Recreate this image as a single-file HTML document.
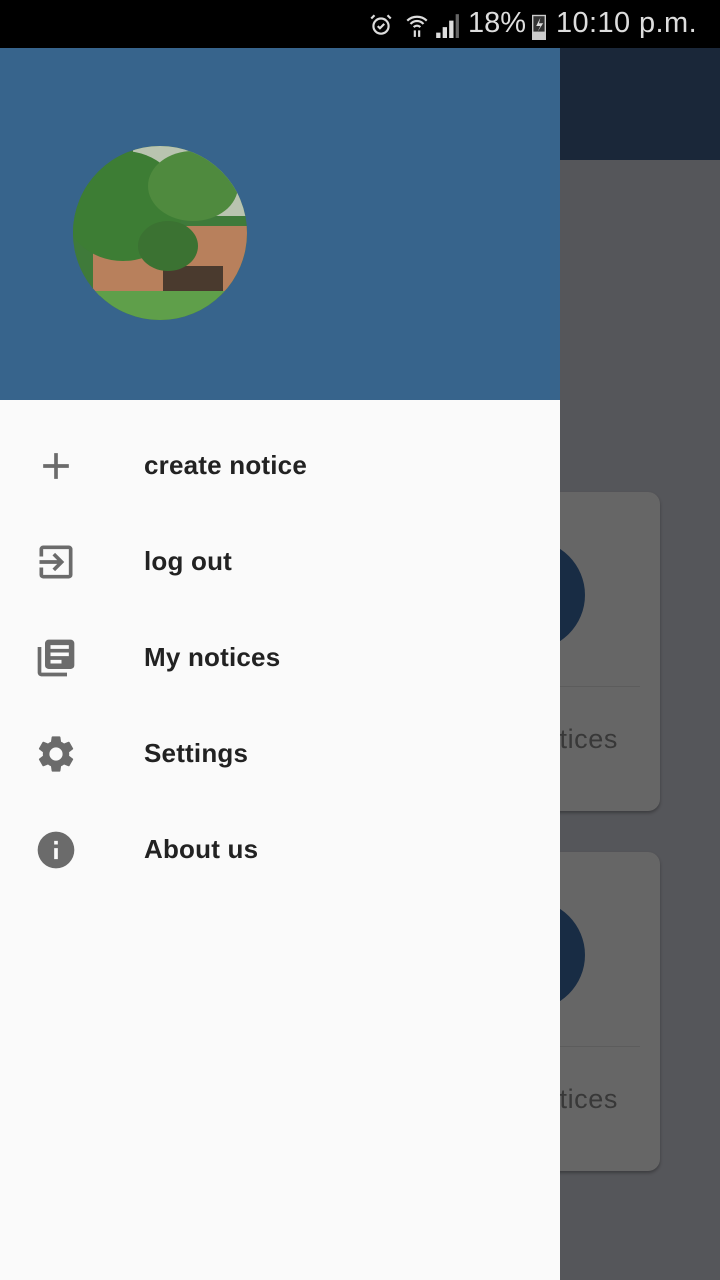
<html><head><style>
body{margin:0;width:720px;height:1280px;position:relative;overflow:hidden;background:#55565a;font-family:"Liberation Sans",Roboto,sans-serif}
.sb{position:absolute;top:0;left:0;width:720px;height:48px;background:#000;color:#ddd}
.ab{position:absolute;top:48px;left:0;width:720px;height:112px;background:#1a2739}
.card{position:absolute;left:380px;width:280px;height:319px;background:#666;border-radius:12px;box-shadow:0 2px 3px rgba(0,0,0,.3);overflow:hidden}
.card .c{position:absolute;left:95px;top:48px;width:110px;height:110px;border-radius:50%;background:#182c44}
.card .d{position:absolute;left:0;right:20px;top:194px;height:1px;background:#5c5c5c}
.card .t{position:absolute;left:0;width:238px;text-align:right;top:232px;font-size:27px;color:#383838;letter-spacing:.6px}
.dr{position:absolute;left:0;top:48px;width:560px;height:1232px;background:#fafafa}
.hd{position:absolute;left:0;top:0;width:560px;height:352px;background:#37648c}
.av{position:absolute;left:73px;top:98px;width:174px;height:174px;border-radius:50%;overflow:hidden;background:#4a7a3a}
.it{position:absolute;left:0;width:560px;height:96px}
.it span{position:absolute;left:144px;top:32px;font-size:26px;color:#222;font-weight:bold;letter-spacing:.2px}
.it svg{position:absolute;left:34px;top:26px}
</style></head><body>
<div class="sb">
<svg style="position:absolute;left:368px;top:12px" width="26" height="26" viewBox="0 0 24 24" fill="none" stroke="#ddd" stroke-width="2"><circle cx="12" cy="13" r="7"/><path d="M9 13l2 2 4-4M3 6l3-3M21 6l-3-3"/></svg>
<svg style="position:absolute;left:404px;top:12px" width="26" height="26" viewBox="0 0 24 24" fill="none" stroke="#ddd" stroke-width="2"><path d="M3 8a13 13 0 0 1 18 0M6 11a8 8 0 0 1 12 0M9 14a4 4 0 0 1 6 0M10 17v6M14 17v6"/></svg>
<svg style="position:absolute;left:434px;top:12px" width="26" height="26" viewBox="0 0 24 24" fill="#ddd"><path d="M2 24h4v-5H2zM8 24h4v-10H8zM14 24h4V8h-4z"/><path d="M20 24h3V2h-3z" fill="#666"/></svg>
<span style="position:absolute;left:468px;top:7px;font-size:29px">18%</span>
<svg style="position:absolute;left:530px;top:12px" width="18" height="28" viewBox="0 0 12 20"><rect x="1" y="2" width="10" height="18" fill="#ccc"/><rect x="2" y="3" width="8" height="11" fill="#333"/><path d="M7 4L4 10h3l-2 4 4-6H6z" fill="#ddd"/></svg>
<span style="position:absolute;left:556px;top:7px;font-size:29px;letter-spacing:.4px">10:10 p.m.</span>
</div>
<div class="ab"></div>
<div class="card" style="top:492px"><div class="c"></div><div class="d"></div><div class="t">My notices</div></div>
<div class="card" style="top:852px"><div class="c"></div><div class="d"></div><div class="t">All notices</div></div>
<div class="dr">
<div class="hd"><div class="av">
<svg width="174" height="174" viewBox="0 0 174 174">
<rect width="174" height="174" fill="#3f7a3a"/>
<rect x="60" y="0" width="114" height="70" fill="#b9c4b0"/>
<rect x="20" y="80" width="154" height="70" fill="#b8805c"/>
<rect x="90" y="120" width="60" height="30" fill="#4a3a2e"/>
<ellipse cx="50" cy="60" rx="60" ry="55" fill="#3d7d34"/>
<ellipse cx="120" cy="40" rx="45" ry="35" fill="#4f8a3e"/>
<ellipse cx="95" cy="100" rx="30" ry="25" fill="#3b7232"/>
<rect x="0" y="145" width="174" height="29" fill="#5f9f4a"/>
</svg></div></div>
<div class="it" style="top:370px"><svg width="44" height="44" viewBox="0 0 24 24"><path d="M19 13h-6v6h-2v-6H5v-2h6V5h2v6h6z" fill="#6b6b6b"/></svg><span>create notice</span></div>
<div class="it" style="top:466px"><svg width="44" height="44" viewBox="0 0 24 24"><path d="M10.09 15.59L11.5 17l5-5-5-5-1.41 1.41L12.67 11H3v2h9.67zM19 3H5a2 2 0 0 0-2 2v4h2V5h14v14H5v-4H3v4a2 2 0 0 0 2 2h14a2 2 0 0 0 2-2V5a2 2 0 0 0-2-2z" fill="#6b6b6b"/></svg><span>log out</span></div>
<div class="it" style="top:562px"><svg width="44" height="44" viewBox="0 0 24 24"><path d="M4 6H2v14a2 2 0 0 0 2 2h14v-2H4V6zm16-4H8a2 2 0 0 0-2 2v12a2 2 0 0 0 2 2h12a2 2 0 0 0 2-2V4a2 2 0 0 0-2-2zm-1 9H9V9h10v2zm-4 4H9v-2h6v2zm4-8H9V5h10v2z" fill="#6b6b6b"/></svg><span>My notices</span></div>
<div class="it" style="top:658px"><svg width="44" height="44" viewBox="0 0 24 24"><path d="M19.14 12.94a7 7 0 0 0 0-1.880l2.03-1.58a.5.5 0 0 0 .12-.61l-1.92-3.32a.5.5 0 0 0-.59-.22l-2.39.96a7 7 0 0 0-1.620-.94l-.36-2.54a.5.5 0 0 0-.48-.41h-3.84a.5.5 0 0 0-.47.41l-.36 2.54a7 7 0 0 0-1.62.94l-2.39-.96a.5.5 0 0 0-.59.22L2.74 8.87a.5.5 0 0 0 .12.61l2.03 1.58a7 7 0 0 0 0 1.88l-2.03 1.58a.5.5 0 0 0-.12.61l1.92 3.32c.12.22.37.29.59.22l2.39-.96c.5.38 1.04.7 1.62.94l.36 2.54c.05.24.24.41.48.41h3.84c.24 0 .44-.17.47-.41l.36-2.54a7 7 0 0 0 1.62-.94l2.39.96c.22.08.47 0 .59-.22l1.92-3.32a.5.5 0 0 0-.12-.61zM12 15.6A3.6 3.6 0 1 1 12 8.4a3.6 3.6 0 0 1 0 7.2z" fill="#6b6b6b"/></svg><span>Settings</span></div>
<div class="it" style="top:754px"><svg width="44" height="44" viewBox="0 0 24 24"><path d="M12 2a10 10 0 1 0 0 20 10 10 0 0 0 0-20zm1 15h-2v-6h2v6zm0-8h-2V7h2v2z" fill="#6b6b6b"/></svg><span>About us</span></div>
</div>
</body></html>
